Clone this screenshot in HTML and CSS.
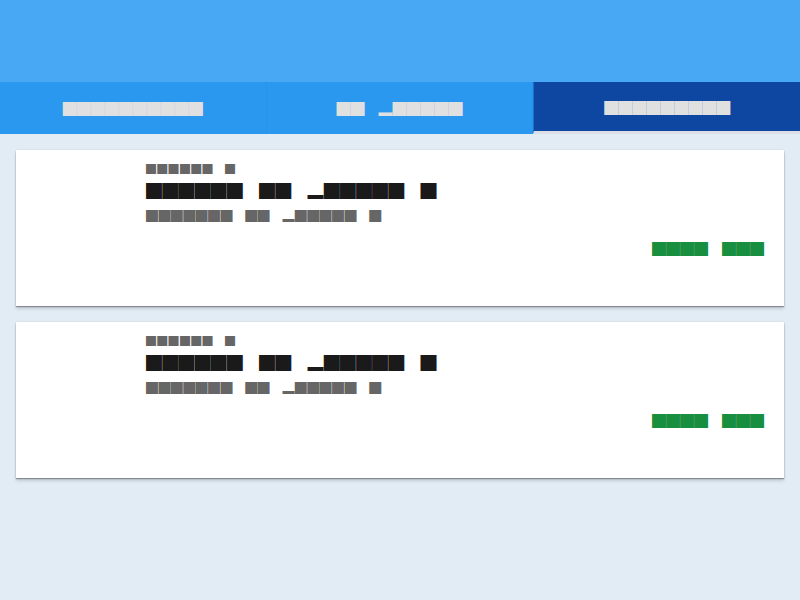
FILE: index.html
```html
<!DOCTYPE html>
<html>
<head>
<meta charset="utf-8">
<link rel="stylesheet" href="styles.css">
</head>
<body>
<header class="appbar"></header>
<nav class="tabs">
  <div class="tab">██████████</div>
  <div class="tab">██　▂█████</div>
  <div class="tab active">█████████</div>
</nav>
<main class="list">
  <div class="card">
    <div class="meta">██████　█</div>
    <div class="title">██████　██　▂█████　█</div>
    <div class="sub">███████　██　▂█████　█</div>
    <div class="action">████　███</div>
  </div>
  <div class="card">
    <div class="meta">██████　█</div>
    <div class="title">██████　██　▂█████　█</div>
    <div class="sub">███████　██　▂█████　█</div>
    <div class="action">████　███</div>
  </div>
</main>
</body>
</html>
```
FILE: styles.css
```css
html, body {
  margin: 0;
  padding: 0;
}
body {
  background: #e2ecf5;
  font-family: "Noto Sans CJK SC", "Noto Sans", sans-serif;
  width: 800px;
  height: 600px;
  overflow: hidden;
}
.appbar {
  height: 82px;
  background: #49a8f4;
}
.tabs {
  display: flex;
  height: 52px;
  background: #2b98f0;
}
.tab {
  flex: 1;
  display: flex;
  align-items: center;
  justify-content: center;
  color: #e0e0e0;
  font-size: 14px;
  line-height: 14px;
  border-right: 1px solid rgba(0, 0, 0, 0.03);
}
.tab.active {
  background: #0d47a1;
  border-bottom: 3px solid #dcdfe5;
  border-right: none;
  border-left: 1px solid #1c6fd0;
}
.list {
  display: flex;
  flex-direction: column;
  gap: 16px;
  padding: 16px 16px 0 16px;
}
.card {
  height: 156px;
  box-sizing: border-box;
  background: #fff;
  padding: 14px 20px 0 130px;
  display: flex;
  flex-direction: column;
  box-shadow: 0 1px 1px rgba(0, 0, 0, 0.3), 0 3px 3px rgba(0, 0, 0, 0.14), 0 0 2px rgba(0, 0, 0, 0.1);
}
.meta {
  font-size: 10px;
  line-height: 10px;
  letter-spacing: 1.3px;
  color: #666;
}
.title {
  margin-top: 8px;
  font-size: 16px;
  line-height: 16px;
  letter-spacing: 0.15px;
  color: #1a1a1a;
}
.sub {
  margin-top: 12px;
  font-size: 12px;
  line-height: 12px;
  letter-spacing: 0.4px;
  color: #666;
}
.action {
  margin-top: 19px;
  font-size: 14px;
  line-height: 14px;
  text-align: right;
  color: #178f3f;
}
```
